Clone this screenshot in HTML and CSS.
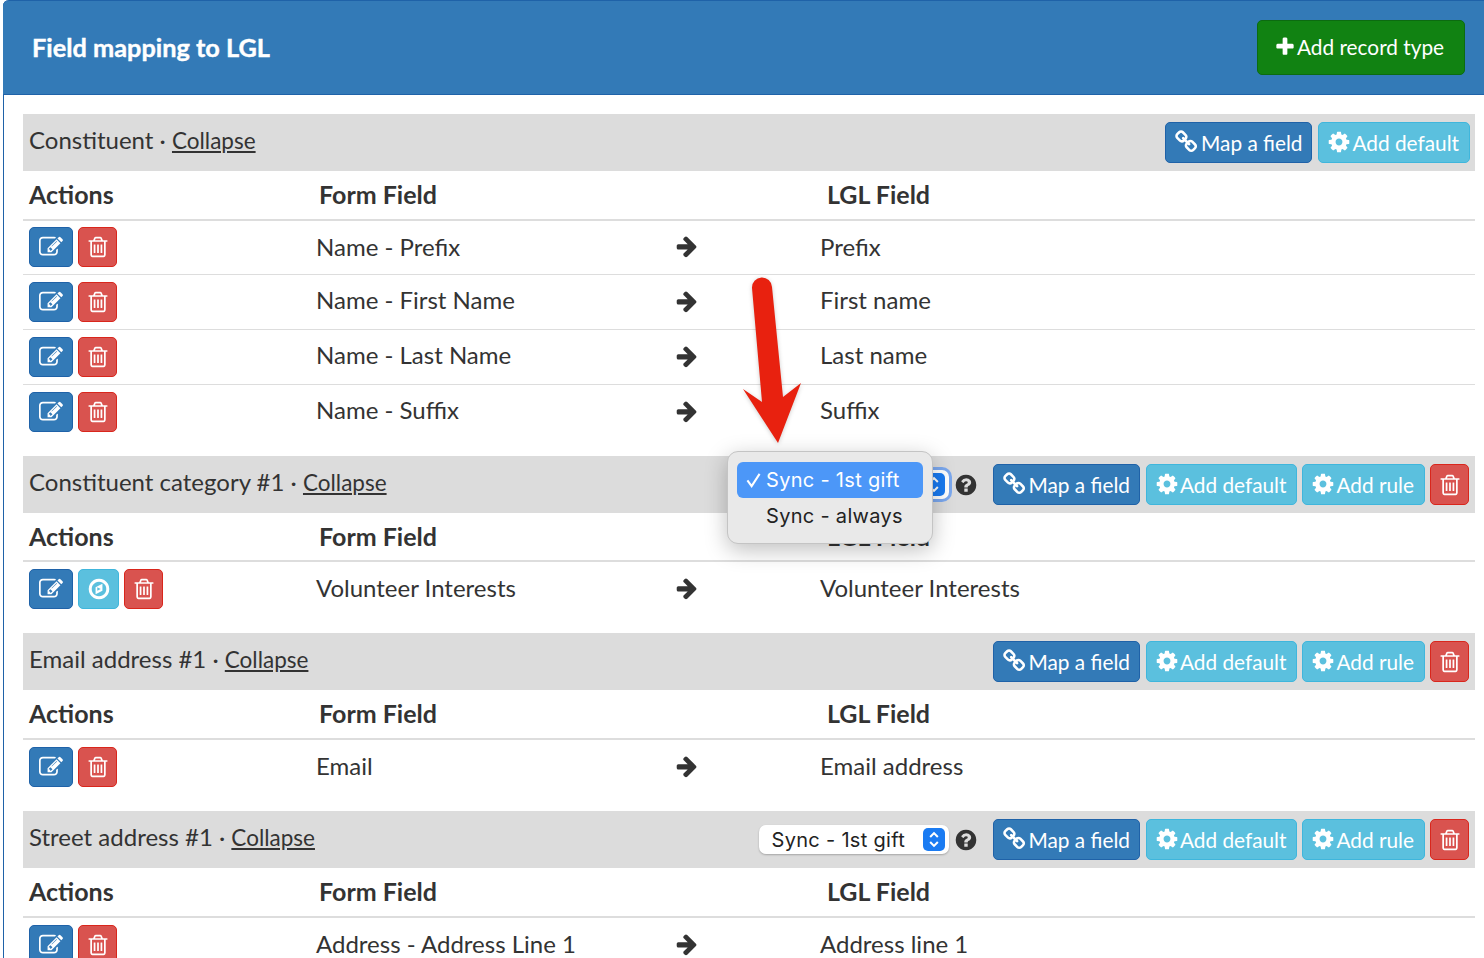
FILE: index.html
```html
<!DOCTYPE html>
<html lang="en">
<head>
    <meta charset="UTF-8">
    <meta name="viewport" content="width=device-width, initial-scale=1.0">
    <title>Field mapping to LGL</title>
    <link rel="stylesheet" href="styles.css">
</head>
<body>
    <svg class="sprite" xmlns="http://www.w3.org/2000/svg">
        <symbol id="i-plus" viewBox="0 0 1792 1792"><path d="M1600 736v192q0 40-28 68t-68 28h-416v416q0 40-28 68t-68 28h-192q-40 0-68-28t-28-68v-416h-416q-40 0-68-28t-28-68v-192q0-40 28-68t68-28h416v-416q0-40 28-68t68-28h192q40 0 68 28t28 68v416h416q40 0 68 28t28 68z"/></symbol>
        <symbol id="i-arrow" viewBox="0 0 1792 1792"><path d="M1600 960q0 54-37 91l-651 651q-39 37-91 37-51 0-90-37l-75-75q-38-38-38-91t38-91l293-293h-704q-52 0-84.5-37.5t-32.5-90.5v-128q0-53 32.5-90.5t84.5-37.5h704l-293-294q-38-36-38-90t38-90l75-75q38-38 90-38 53 0 91 38l651 651q37 35 37 90z"/></symbol>
        <symbol id="i-help" viewBox="0 0 1792 1792"><path d="M1024 1376v-192q0-14-9-23t-23-9h-192q-14 0-23 9t-9 23v192q0 14 9 23t23 9h192q14 0 23-9t9-23zm256-672q0-88-55.5-163t-138.5-116-170-41q-243 0-371 213-15 24 8 42l132 100q7 6 19 6 16 0 25-12 53-68 86-92 34-24 86-24 48 0 85.5 26t37.5 59q0 38-20 61t-68 45q-63 28-115.5 86.5t-52.5 125.5v36q0 14 9 23t23 9h192q14 0 23-9t9-23q0-19 21.5-49.5t54.5-49.5q32-18 49-28.5t46-35 44.5-48 28-60.5 12.5-81zm384 192q0 209-103 385.5t-279.5 279.5-385.5 103-385.5-103-279.5-279.5-103-385.5 103-385.5 279.5-279.5 385.5-103 385.5 103 279.5 279.5 103 385.5z"/></symbol>
        <symbol id="i-cog" viewBox="0 0 1792 1792"><path d="M1152 896q0-106-75-181t-181-75-181 75-75 181 75 181 181 75 181-75 75-181zm512-109v222q0 12-8 23t-20 13l-185 28q-19 54-39 91 35 50 107 138 10 12 10 25t-9 23q-27 37-99 108t-94 71q-12 0-26-9l-138-108q-44 23-91 38-16 136-29 186-7 28-36 28h-222q-14 0-24.5-8.5t-11.5-21.5l-28-184q-49-16-90-37l-141 107q-10 9-25 9-14 0-25-11-126-114-165-168-7-10-7-23 0-12 8-23 15-21 51-66.5t54-70.5q-27-50-41-99l-183-27q-13-2-21-12.5t-8-23.5v-222q0-12 8-23t19-13l186-28q14-46 39-92-40-57-107-138-10-12-10-24 0-10 9-23 26-36 98.5-107.5t94.5-71.5q13 0 26 10l138 107q44-23 91-38 16-136 29-186 7-28 36-28h222q14 0 24.5 8.5t11.5 21.5l28 184q49 16 90 37l142-107q9-9 24-9 13 0 25 10 129 119 165 170 7 8 7 22 0 12-8 23-15 21-51 66.5t-54 70.5q26 50 41 98l183 28q13 2 21 12.5t8 23.5z"/></symbol>
        <symbol id="i-link" viewBox="0 0 1792 1792"><path d="M1456 1216q0-40-28-68l-208-208q-28-28-68-28-42 0-72 32 3 3 19 18.5t21.5 21.5 15 19 13 25.5 3.5 27.5q0 40-28 68t-68 28q-15 0-27.5-3.5t-25.5-13-19-15-21.5-21.5-18.5-19q-33 31-33 73 0 40 28 68l206 207q27 27 68 27 40 0 68-26l147-146q28-28 28-67zm-703-705q0-40-28-68l-206-207q-28-28-68-28-39 0-68 27l-147 146q-28 28-28 67 0 40 28 68l208 208q27 27 68 27 42 0 72-31-3-3-19-18.5t-21.5-21.5-15-19-13-25.5-3.5-27.5q0-40 28-68t68-28q15 0 27.5 3.5t25.5 13 19 15 21.5 21.5 18.5 19q33-31 33-73zm895 705q0 120-85 203l-147 146q-83 83-203 83-121 0-204-85l-206-207q-83-83-83-203 0-123 88-209l-88-88q-86 88-208 88-120 0-204-84l-208-208q-84-84-84-204t85-203l147-146q83-83 203-83 121 0 204 85l206 207q83 83 83 203 0 123-88 209l88 88q86-88 208-88 120 0 204 84l208 208q84 84 84 204z"/></symbol>
        <symbol id="i-edit" viewBox="0 0 1792 1792"><path d="M888 1184l116-116-152-152-116 116v56h96v96h56zm440-720q-16-16-33 1l-350 350q-17 17-1 33t33-1l350-350q17-17 1-33zm80 594v190q0 119-84.5 203.5t-203.5 84.5h-832q-119 0-203.5-84.5t-84.5-203.5v-832q0-119 84.5-203.5t203.5-84.5h832q63 0 117 25 15 7 18 23 3 17-9 29l-49 49q-14 14-32 8-23-6-45-6h-832q-66 0-113 47t-47 113v832q0 66 47 113t113 47h832q66 0 113-47t47-113v-126q0-13 9-22l64-64q15-15 35-7t20 29zm-96-738l288 288-672 672h-288v-288zm444 132l-92 92-288-288 92-92q28-28 68-28t68 28l152 152q28 28 28 68t-28 68z"/></symbol>
        <symbol id="i-trash" viewBox="0 0 1792 1792"><path d="M704 736v576q0 14-9 23t-23 9h-64q-14 0-23-9t-9-23v-576q0-14 9-23t23-9h64q14 0 23 9t9 23zm256 0v576q0 14-9 23t-23 9h-64q-14 0-23-9t-9-23v-576q0-14 9-23t23-9h64q14 0 23 9t9 23zm256 0v576q0 14-9 23t-23 9h-64q-14 0-23-9t-9-23v-576q0-14 9-23t23-9h64q14 0 23 9t9 23zm128 724v-948h-896v948q0 22 7 40.5t14.5 27 10.5 8.5h832q3 0 10.5-8.5t14.5-27 7-40.5zm-672-1076h448l-48-117q-7-9-17-11h-317q-10 2-17 11zm928 32v64q0 14-9 23t-23 9h-96v948q0 83-47 143.5t-113 60.5h-832q-66 0-113-58.5t-47-141.5v-952h-96q-14 0-23-9t-9-23v-64q0-14 9-23t23-9h309l70-167q15-37 54-63t79-26h320q40 0 79 26t54 63l70 167h309q14 0 23 9t9 23z"/></symbol>
        <symbol id="i-compass" viewBox="0 0 1792 1792"><path fill-rule="evenodd" d="M768 1024l256-128-256-128zM1152 512v512l-512 256v-512zM1440 896q0-148-73-273t-198-198-273-73-273 73-198 198-73 273 73 273 198 198 273 73 273-73 198-198 73-273zM1664 896q0 209-103 385.5t-279.5 279.5-385.5 103-385.5-103-279.5-279.5-103-385.5 103-385.5 279.5-279.5 385.5-103 385.5 103 279.5 279.5 103 385.5z"/></symbol>
    </svg>

    <div class="panel">
        <div class="panel-heading">
            <h1>Field mapping to LGL</h1>
            <button class="btn btn-green btn-add"><svg class="icon"><use href="#i-plus"/></svg>Add record type</button>
        </div>

        <div class="panel-body">
            <div class="record">
                <div class="record-head">
                    <div class="record-title">Constituent · <a href="#">Collapse</a></div>
                    <div class="record-tools">
                        <button class="btn btn-blue"><svg class="icon"><use href="#i-link"/></svg>Map a field</button>
                        <button class="btn btn-cyan"><svg class="icon"><use href="#i-cog"/></svg>Add default</button>
                    </div>
                </div>
                <table>
                    <colgroup><col class="col-actions"><col class="col-form"><col class="col-arrow"><col></colgroup>
                    <thead>
                        <tr><th>Actions</th><th class="th-form">Form Field</th><th></th><th class="th-lgl">LGL Field</th></tr>
                    </thead>
                    <tbody>
                        <tr class="row-short">
                            <td><div class="row-btns"><button class="btn-sq btn-blue"><svg class="icon"><use href="#i-edit"/></svg></button><button class="btn-sq btn-trash btn-red"><svg class="icon"><use href="#i-trash"/></svg></button></div></td>
                            <td>Name - Prefix</td>
                            <td><svg class="icon-arrow"><use href="#i-arrow"/></svg></td>
                            <td>Prefix</td>
                        </tr>
                        <tr>
                            <td><div class="row-btns"><button class="btn-sq btn-blue"><svg class="icon"><use href="#i-edit"/></svg></button><button class="btn-sq btn-trash btn-red"><svg class="icon"><use href="#i-trash"/></svg></button></div></td>
                            <td>Name - First Name</td>
                            <td><svg class="icon-arrow"><use href="#i-arrow"/></svg></td>
                            <td>First name</td>
                        </tr>
                        <tr>
                            <td><div class="row-btns"><button class="btn-sq btn-blue"><svg class="icon"><use href="#i-edit"/></svg></button><button class="btn-sq btn-trash btn-red"><svg class="icon"><use href="#i-trash"/></svg></button></div></td>
                            <td>Name - Last Name</td>
                            <td><svg class="icon-arrow"><use href="#i-arrow"/></svg></td>
                            <td>Last name</td>
                        </tr>
                        <tr>
                            <td><div class="row-btns"><button class="btn-sq btn-blue"><svg class="icon"><use href="#i-edit"/></svg></button><button class="btn-sq btn-trash btn-red"><svg class="icon"><use href="#i-trash"/></svg></button></div></td>
                            <td>Name - Suffix</td>
                            <td><svg class="icon-arrow"><use href="#i-arrow"/></svg></td>
                            <td>Suffix</td>
                        </tr>
                    </tbody>
                </table>
            </div>

            <div class="record">
                <div class="record-head">
                    <div class="record-title">Constituent category #1 · <a href="#">Collapse</a></div>
                    <div class="record-tools">
                        <div class="sync sync-focus">Sync - 1st gift<span class="stepper"><svg viewBox="0 0 12 18"><path d="M3 7l3-3 3 3M3 11l3 3 3-3"/></svg></span></div>
                        <svg class="icon-help"><use href="#i-help"/></svg>
                        <button class="btn btn-blue"><svg class="icon"><use href="#i-link"/></svg>Map a field</button>
                        <button class="btn btn-cyan"><svg class="icon"><use href="#i-cog"/></svg>Add default</button>
                        <button class="btn btn-cyan"><svg class="icon"><use href="#i-cog"/></svg>Add rule</button>
                        <button class="btn-del btn-red"><svg class="icon"><use href="#i-trash"/></svg></button>
                    </div>
                </div>
                <table>
                    <colgroup><col class="col-actions"><col class="col-form"><col class="col-arrow"><col></colgroup>
                    <thead class="head-short">
                        <tr><th>Actions</th><th class="th-form">Form Field</th><th></th><th class="th-lgl">LGL Field</th></tr>
                    </thead>
                    <tbody>
                        <tr>
                            <td><div class="row-btns"><button class="btn-sq btn-blue"><svg class="icon"><use href="#i-edit"/></svg></button><button class="btn-sq btn-compass btn-cyan"><svg class="icon"><use href="#i-compass"/></svg></button><button class="btn-sq btn-trash btn-red"><svg class="icon"><use href="#i-trash"/></svg></button></div></td>
                            <td>Volunteer Interests</td>
                            <td><svg class="icon-arrow"><use href="#i-arrow"/></svg></td>
                            <td>Volunteer Interests</td>
                        </tr>
                    </tbody>
                </table>
            </div>

            <div class="record">
                <div class="record-head">
                    <div class="record-title">Email address #1 · <a href="#">Collapse</a></div>
                    <div class="record-tools">
                        <button class="btn btn-blue"><svg class="icon"><use href="#i-link"/></svg>Map a field</button>
                        <button class="btn btn-cyan"><svg class="icon"><use href="#i-cog"/></svg>Add default</button>
                        <button class="btn btn-cyan"><svg class="icon"><use href="#i-cog"/></svg>Add rule</button>
                        <button class="btn-del btn-red"><svg class="icon"><use href="#i-trash"/></svg></button>
                    </div>
                </div>
                <table>
                    <colgroup><col class="col-actions"><col class="col-form"><col class="col-arrow"><col></colgroup>
                    <thead>
                        <tr><th>Actions</th><th class="th-form">Form Field</th><th></th><th class="th-lgl">LGL Field</th></tr>
                    </thead>
                    <tbody>
                        <tr>
                            <td><div class="row-btns"><button class="btn-sq btn-blue"><svg class="icon"><use href="#i-edit"/></svg></button><button class="btn-sq btn-trash btn-red"><svg class="icon"><use href="#i-trash"/></svg></button></div></td>
                            <td>Email</td>
                            <td><svg class="icon-arrow"><use href="#i-arrow"/></svg></td>
                            <td>Email address</td>
                        </tr>
                    </tbody>
                </table>
            </div>

            <div class="record">
                <div class="record-head">
                    <div class="record-title">Street address #1 · <a href="#">Collapse</a></div>
                    <div class="record-tools">
                        <div class="sync">Sync - 1st gift<span class="stepper"><svg viewBox="0 0 12 18"><path d="M3 7l3-3 3 3M3 11l3 3 3-3"/></svg></span></div>
                        <svg class="icon-help"><use href="#i-help"/></svg>
                        <button class="btn btn-blue"><svg class="icon"><use href="#i-link"/></svg>Map a field</button>
                        <button class="btn btn-cyan"><svg class="icon"><use href="#i-cog"/></svg>Add default</button>
                        <button class="btn btn-cyan"><svg class="icon"><use href="#i-cog"/></svg>Add rule</button>
                        <button class="btn-del btn-red"><svg class="icon"><use href="#i-trash"/></svg></button>
                    </div>
                </div>
                <table>
                    <colgroup><col class="col-actions"><col class="col-form"><col class="col-arrow"><col></colgroup>
                    <thead>
                        <tr><th>Actions</th><th class="th-form">Form Field</th><th></th><th class="th-lgl">LGL Field</th></tr>
                    </thead>
                    <tbody>
                        <tr>
                            <td><div class="row-btns"><button class="btn-sq btn-blue"><svg class="icon"><use href="#i-edit"/></svg></button><button class="btn-sq btn-trash btn-red"><svg class="icon"><use href="#i-trash"/></svg></button></div></td>
                            <td>Address - Address Line 1</td>
                            <td><svg class="icon-arrow"><use href="#i-arrow"/></svg></td>
                            <td>Address line 1</td>
                        </tr>
                    </tbody>
                </table>
            </div>
        </div>
    </div>

    <!-- open dropdown and the red pointer lie over the page -->
    <div class="sync-menu">
        <div class="sync-option sync-option-on"><svg class="sync-check" viewBox="0 0 16 16"><path d="M1.5 8.5l4.5 6 8.5-13"/></svg>Sync - 1st gift</div>
        <div class="sync-option">Sync - always</div>
    </div>
    <svg class="pointer" viewBox="0 0 70 175"><path d="M1 113 L20 126 L10 12 A10 10 0 0 1 30 11 L41 121 L59 107 L36 167 Z"/></svg>
</body>
</html>
```

FILE: styles.css
```css
html, body {
    height: 100%;
    overflow: hidden;
}

body {
    position: relative;
    margin: 0;
    padding-left: 3px;
    font-family: 'Lato', 'Noto Sans', sans-serif;
    font-size: 24px;
    color: #333;
    background-color: #fff;
}

.sprite {
    display: none;
}

.icon {
    width: 24px;
    height: 24px;
    fill: #fff;
    flex: none;
}

/* panel */
.panel {
    width: 1491px;
    box-sizing: border-box;
    border-left: 1px solid #1f62a8;
    border-top-left-radius: 6px;
}

.panel-heading {
    height: 95px;
    box-sizing: border-box;
    padding: 0 29px;
    display: flex;
    justify-content: space-between;
    align-items: center;
    background-color: #337ab7;
    border-top: 1px solid #1f62a8;
    border-bottom: 1px solid #1f62a8;
    border-top-left-radius: 6px;
    margin-left: -1px;
}

.panel-heading h1 {
    margin: 0 0 2px 0;
    font-size: 25.3px;
    font-weight: 700;
    color: #fff;
    -webkit-text-stroke: 0.4px #fff;
}

.panel-body {
    padding: 19px 19px 0 19px;
}

.record {
    margin-bottom: 17px;
}

.record-head {
    height: 57px;
    padding: 0 5px 0 6px;
    display: flex;
    justify-content: space-between;
    align-items: center;
    background-color: #dcdcdc;
}

.record-title {
    padding-bottom: 7px;
}

.record-title a {
    color: #333;
    font-size: 22.5px;
}

.record-tools {
    display: flex;
    align-items: center;
    gap: 5px;
}

/* buttons */
.btn, .btn-sq, .btn-del {
    font-family: inherit;
    border-radius: 5px;
    border: 1px solid;
    color: #fff;
    display: flex;
    align-items: center;
    justify-content: center;
    padding: 0;
    cursor: pointer;
}

.btn {
    height: 41px;
    padding: 0 9px 1px 9px;
    font-size: 20.8px;
    gap: 2px;
    white-space: nowrap;
}

.btn.btn-blue {
    margin-right: 1px;
}

.btn.btn-cyan {
    padding-left: 8px;
    padding-right: 10px;
    gap: 1px;
}

.btn-add {
    width: 208px;
    height: 55px;
    padding: 0 0 2px 16px;
    justify-content: flex-start;
    gap: 1px;
}

.btn-add .icon {
    width: 22px;
    height: 22px;
}

.btn-sq {
    width: 44px;
    height: 40px;
}

.btn-trash {
    width: 39px;
}

.btn-compass {
    width: 41px;
}

.btn-del {
    width: 39px;
    height: 41px;
    margin-right: 1px;
}

.btn-green {
    background-color: #118212;
    border-color: #0c6b10;
}

.btn-blue {
    background-color: #337ab7;
    border-color: #1f62a8;
}

.btn-cyan {
    background-color: #5bc0de;
    border-color: #3fb6dc;
}

.btn-red {
    background-color: #d9534f;
    border-color: #d9261c;
}

.row-btns {
    display: flex;
    gap: 5px;
}

/* field table */
table {
    width: 100%;
    border-collapse: collapse;
    table-layout: fixed;
}

.col-actions {
    width: 287px;
}

.col-form {
    width: 359px;
}

.col-arrow {
    width: 145px;
}

th {
    height: 49px;
    padding: 0 0 2px 6px;
    text-align: left;
    font-size: 25px;
    font-weight: 700;
    border-bottom: 2px solid #ddd;
    box-sizing: border-box;
}

.head-short th {
    height: 48px;
}

.th-form {
    padding-left: 9px;
}

.th-lgl {
    padding-left: 13px;
}

td {
    height: 55px;
    padding: 0 0 0 6px;
    box-sizing: border-box;
    border-top: 1px solid #ddd;
}

td:nth-child(n+2) {
    padding-bottom: 4px;
}

td:nth-child(3) {
    padding-bottom: 2px;
}

.row-short td {
    height: 54px;
}

.row-short td:nth-child(n+2) {
    padding-bottom: 2px;
}

thead + tbody tr:first-child td {
    border-top: none;
}

.icon-arrow {
    width: 24px;
    height: 24px;
    fill: #333;
    display: block;
}

.icon-help {
    width: 24px;
    height: 24px;
    fill: #333;
    margin-right: 10px;
    flex: none;
}

/* sync select */
.sync {
    width: 190px;
    height: 29px;
    box-sizing: border-box;
    padding: 0 4px 0 13px;
    display: flex;
    justify-content: space-between;
    align-items: center;
    font-family: 'Inter', sans-serif;
    font-size: 20px;
    letter-spacing: 0.3px;
    color: #222;
    background-color: #fff;
    border-radius: 7px;
    box-shadow: 0 1px 2px rgba(0, 0, 0, 0.25);
}

.sync-focus {
    box-shadow: 0 0 0 3px #7ba8ee;
}

.stepper {
    width: 22px;
    height: 23px;
    border-radius: 5px;
    background-color: #1a7bf2;
}

.stepper svg {
    display: block;
    width: 22px;
    height: 23px;
    fill: none;
    stroke: #fff;
    stroke-width: 1.6;
}

.sync-menu {
    position: absolute;
    left: 727px;
    top: 451px;
    width: 206px;
    height: 93px;
    box-sizing: border-box;
    padding: 10px 9px;
    font-family: 'Inter', sans-serif;
    font-size: 20px;
    letter-spacing: 0.3px;
    color: #222;
    background-color: #e9e9e9;
    border: 1px solid #c4c4c4;
    border-radius: 11px;
    box-shadow: 0 6px 22px rgba(0, 0, 0, 0.25);
}

.sync-option {
    height: 36px;
    padding-left: 29px;
    display: flex;
    align-items: center;
    position: relative;
    border-radius: 6px;
}

.sync-option-on {
    color: #fff;
    background-color: #4c97f8;
}

.sync-check {
    position: absolute;
    left: 9px;
    top: 10px;
    width: 15px;
    height: 16px;
    fill: none;
    stroke: #fff;
    stroke-width: 2.2;
}

.pointer {
    position: absolute;
    left: 742px;
    top: 276px;
    width: 70px;
    height: 175px;
    fill: #e8210f;
    filter: drop-shadow(0 1px 2px rgba(0, 0, 0, 0.2));
}
```
